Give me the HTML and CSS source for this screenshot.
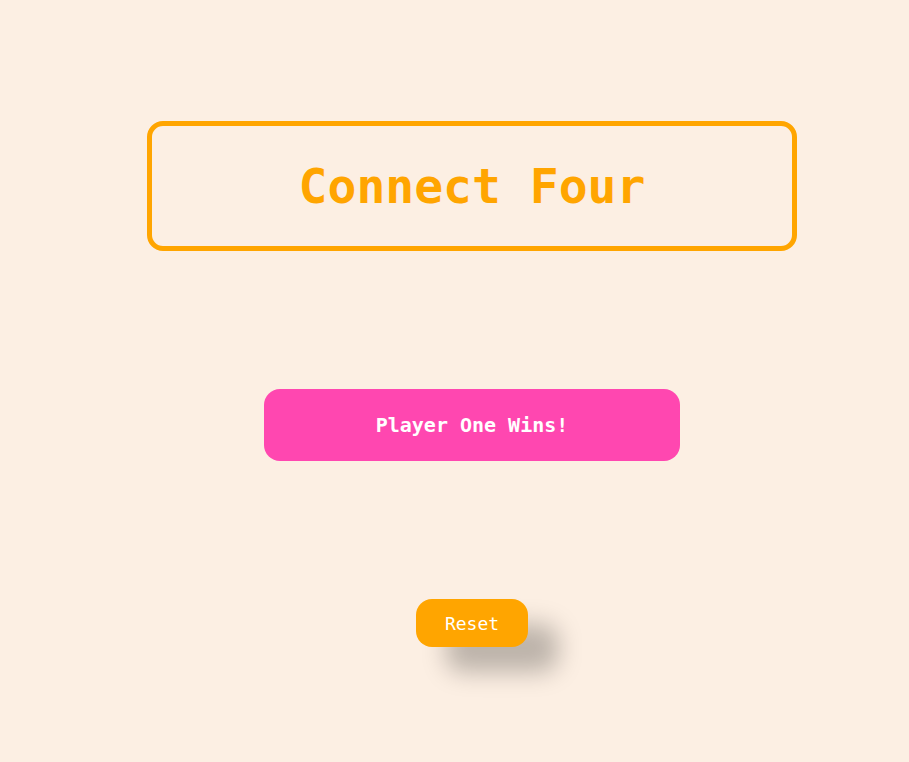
FILE: index.html
```html
<!DOCTYPE html>
<html>
<head>
<meta charset="utf-8">
<link rel="stylesheet" href="styles.css">
</head>
<body>
<main class="game">
  <header class="title-box">
    <h1 class="title">Connect Four</h1>
  </header>
  <div class="status">Player One Wins!</div>
  <button class="reset">Reset</button>
</main>
</body>
</html>
```
FILE: styles.css
```css
html, body {
  margin: 0;
  padding: 0;
  background: #fcefe3;
  height: 100%;
}
body {
  font-family: "DejaVu Sans Mono", monospace;
}
.game {
  display: flex;
  flex-direction: column;
  align-items: center;
  padding-top: 121px;
  padding-left: 35px;
}
.title-box {
  box-sizing: border-box;
  width: 650px;
  height: 130px;
  border: 5px solid #ffa500;
  border-radius: 16px;
  display: flex;
  align-items: center;
  justify-content: center;
}
.title {
  margin: 0;
  font-size: 48px;
  font-weight: bold;
  color: #ffa500;
}
.status {
  margin-top: 138px;
  width: 416px;
  height: 72px;
  background: #ff47b0;
  border-radius: 16px;
  display: flex;
  align-items: center;
  justify-content: center;
  color: #fff;
  font-size: 20px;
  font-weight: bold;
}
.reset {
  margin-top: 138px;
  width: 112px;
  height: 48px;
  border: none;
  border-radius: 16px;
  background: #ffa500;
  color: #fff;
  font-family: "DejaVu Sans Mono", monospace;
  font-size: 18px;
  font-weight: normal;
  box-shadow: 30px 25px 25px rgba(0, 0, 0, 0.25);
}
```
